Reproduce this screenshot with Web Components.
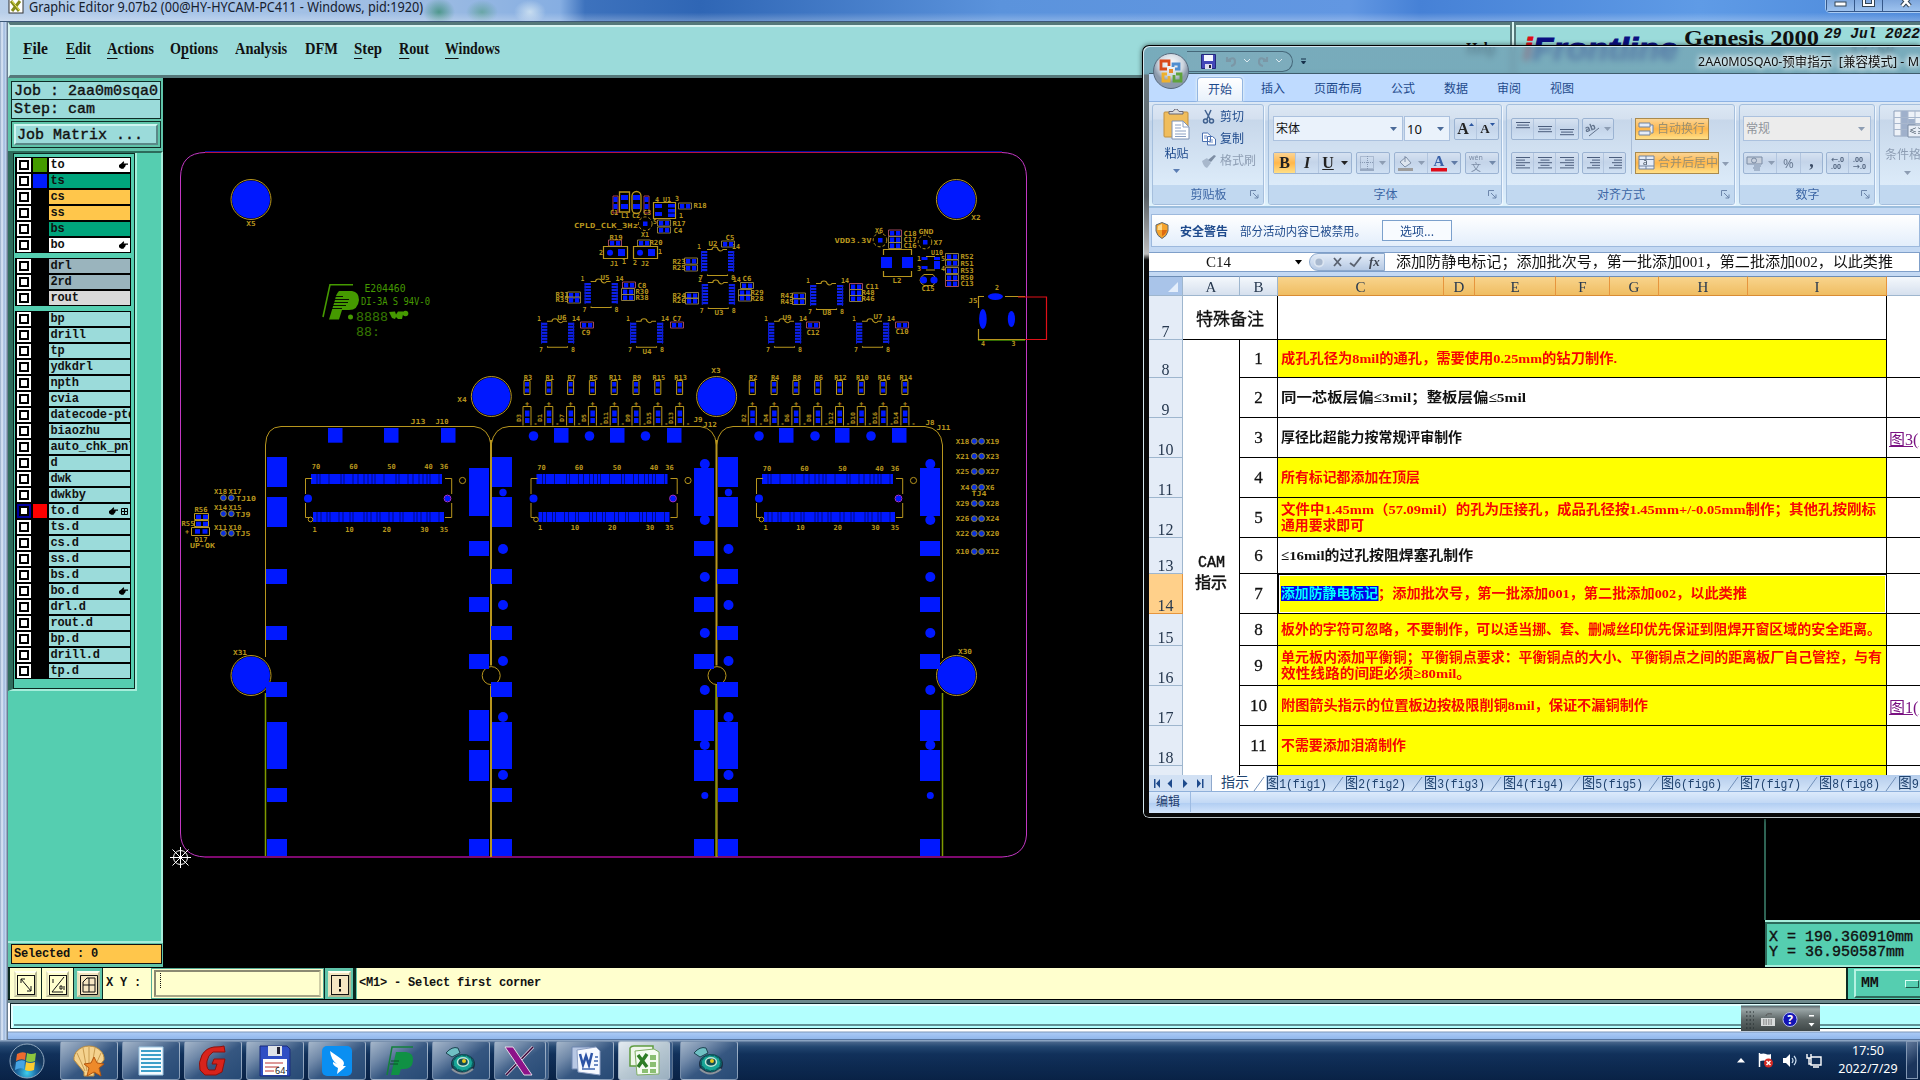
<!DOCTYPE html>
<html lang="zh-CN">
<head>
<meta charset="utf-8">
<title>Graphic Editor</title>
<style>
    html, body { margin: 0; padding: 0; width: 1920px; height: 1080px; overflow: hidden; background: #000; }
    body { position: relative; font-family: "Noto Sans", "Noto Sans CJK SC", sans-serif; }
</style>
</head>
<body>
<genesis-window></genesis-window>
<excel-window></excel-window>
<win-taskbar></win-taskbar>

<script>
/* ===== small helpers ===== */
function define(name, html) {
    customElements.define(name, class extends HTMLElement {
        connectedCallback() {
            if (this.shadowRoot) return;
            this.attachShadow({ mode: 'open' });
            this.shadowRoot.innerHTML = typeof html === 'function' ? html(this) : html;
        }
    });
}

/* ===== layer list ===== */
const HAND = '<svg width="9" height="8" viewBox="0 0 12 10"><path d="M0 5l3-2 3-3 1 1-1 2h6v1.600H9v1h-.5v1.500H8V8H7L6 10H3L0 8z"/></svg>';
const GRIDMARK = '<svg width="7" height="7" viewBox="0 0 7 7" style="margin-left:3px"><path d="M.5.5h6v6h-6zM3.500 0v7M0 3.500h7" fill="none" stroke="#000"/></svg>';

define('layer-row', el => `
    <style>
        :host { display: flex; gap: 2px; height: 14px; }
        .box { width: 4px; height: 4px; background: #fff; border: 2px solid #000; padding: 1px; }
        .chk { box-sizing: border-box; width: 14px; height: 14px; padding: 2px; background: ${el.getAttribute('chk') || '#fff'}; }
        .swatch { width: 14px; height: 14px; background: ${el.getAttribute('swatch') || '#000'}; }
        .name { display: flex; align-items: center; width: 81px; height: 14px; box-sizing: border-box; padding: 0 2px 0 1.5px;
            overflow: hidden; white-space: pre; background: ${el.getAttribute('bg') || '#9bdbda'};
            font: bold 12px/15px "Liberation Mono", monospace; letter-spacing: -.15px; color: #111; }
        .name i { margin-left: auto; flex: none; height: 8px; line-height: 0; }
    </style>
    <div class="chk"><div class="box"></div></div>
    <div class="swatch"></div>
    <div class="name"><slot></slot><i>${el.hasAttribute('hand') ? HAND : ''}${el.hasAttribute('mark') ? GRIDMARK : ''}</i></div>
`);

const plain = 'bp drill tp ydkdrl npth cvia datecode-ptd biaozhu auto_chk_pnl d dwk dwkby to.d ts.d cs.d ss.d bs.d bo.d drl.d rout.d bp.d drill.d tp.d'.split(' ');
const plainRows = plain.map(n => {
    let a = '';
    if (n === 'to.d') a = 'chk="#0000a0" swatch="#ff0000" hand mark';
    if (n === 'bo.d') a = 'hand';
    return `<layer-row ${a}>${n}</layer-row>`;
}).join('');

define('layer-panel', `
    <style>
        :host { display: block; flex: 1; background: #55ceb0; border-right: 2px solid #a6eedb; border-bottom: 2px solid #a6eedb; border-top: 2px solid #2c6b5b; box-sizing: border-box; }
        .list { width: 122px; height: 536px; border-left: 5px solid #2f6c5c; border-right: 2px solid #a6eedb; border-bottom: 2px solid #a6eedb; }
        .in { box-sizing: border-box; height: 536px; border: 1px solid #0c2a22; padding: 3px 2px 0 1px; display: flex; flex-direction: column; gap: 5px; }
        .grp { display: flex; flex-direction: column; gap: 2px; background: #000; padding: 1px 1px 1px 2px; width: 113px; }
    </style>
    <div class="list"><div class="in">
        <div class="grp">
            <layer-row swatch="#459a00" bg="#fff" hand>to</layer-row>
            <layer-row swatch="#001cff" bg="#00a47c">ts</layer-row>
            <layer-row bg="#ffc64b">cs</layer-row>
            <layer-row bg="#ffc64b">ss</layer-row>
            <layer-row bg="#00a47c">bs</layer-row>
            <layer-row bg="#fff" hand>bo</layer-row>
        </div>
        <div class="grp">
            <layer-row bg="#9ab4bd">drl</layer-row>
            <layer-row bg="#9ab4bd">2rd</layer-row>
            <layer-row bg="#d9d9d9">rout</layer-row>
        </div>
        <div class="grp">${plainRows}</div>
    </div></div>
`);

define('side-bar', `
    <style>
        :host { display: flex; flex-direction: column; width: 155px; flex: none; background: #60c4aa; font-family: "Liberation Mono", monospace; color: #111; }
        .line { box-sizing: border-box; width: 150px; margin-left: 3px; height: 19px; border: 1px solid #0e2b25; background: #9bdbda; font-size: 15px; line-height: 19px; padding-left: 2px; white-space: pre; -webkit-text-stroke: .4px #111; }
        .line + .line { border-top: 0; line-height: 20px; }
        .matrix { box-sizing: border-box; width: 150px; height: 27px; margin: 2px 0 2px 3px; border: 1px solid #0e2b25; padding: 2px; }
        .btn { box-sizing: border-box; height: 21px; background: #9bdbda; border: 2px solid; border-color: #cff5f1 #5a8887 #5a8887 #cff5f1; font-size: 15px; line-height: 19px; padding-left: 1px; white-space: pre; -webkit-text-stroke: .4px #111; }
        .sel { box-sizing: border-box; width: 151px; height: 20px; margin: 1px 0 3px 3px; border: 1px solid #111; background: #ffc64b; font: bold 12px/18px "Liberation Mono", monospace; letter-spacing: -.2px; padding-left: 2px; white-space: pre; }
    </style>
    <div style="height:3px"></div>
    <div class="line">Job : 2aa0m0sqa0</div>
    <div class="line">Step: cam</div>
    <div class="matrix"><div class="btn">Job Matrix ...</div></div>
    <div style="height:1px"></div>
    <layer-panel></layer-panel>
    <div class="sel">Selected : 0</div>
`);

/* ===== board drawing; coordinates are canvas pixels ===== */
const GOLD = '#b8961e', BLUE = '#0018ff', GREEN = '#459a00';

function boardSvg() {
    const out = [];
    const rect = (x, y, w, h, f = BLUE) => out.push(`<rect x="${x}" y="${y}" width="${w}" height="${h}" fill="${f}"/>`);
    const dot = (x, y, r, f = BLUE) => out.push(`<circle cx="${x}" cy="${y}" r="${r}" fill="${f}"/>`);
    const ring = (x, y, r, s = GOLD) => out.push(`<circle cx="${x}" cy="${y}" r="${r}" fill="none" stroke="${s}"/>`);
    const line = (d, s = GOLD, w = 1) => out.push(`<path d="${d}" fill="none" stroke="${s}" stroke-width="${w}"/>`);
    // label centred on x, y
    const txt = (x, y, s, w = s.length * 4.7, rot = 0, size = 7, f = GOLD) =>
        out.push(`<text x="${x}" y="${y + size * .35}" font-size="${size}" fill="${f}"${f === GOLD ? ' font-weight="bold"' : ''} text-anchor="middle" textLength="${w}" lengthAdjust="spacingAndGlyphs"${rot ? ` transform="rotate(-90 ${x} ${y})"` : ''}>${s}</text>`);

    // outline
    line('M205 152.500Q181 153 180.500 177V833Q181 856 205 857', '#c338c3');
    line('M1002 857Q1025 856 1026.500 835V177Q1026 153 1002 152.500', '#c338c3');
    line('M205 151.500H1002', '#0010a0');
    line('M205 152.500H1002', '#b81040');
    line('M205 857H1002', '#a80d95', 1.6);

    // fixing holes
    [[251, 199.5], [956.4, 199.5], [491.3, 396.5], [716.6, 396.5], [251, 675.5], [956.5, 675.5]].forEach(([x, y]) => { dot(x, y, 19); ring(x, y, 20); });
    txt(251, 224, 'X5'); txt(976, 218, 'X2'); txt(462, 400, 'X4'); txt(716, 371, 'X3'); txt(240, 652.5, 'X31'); txt(965, 652, 'X30');

    // modules
    line('M265.500 657V445Q266 427 281 426.500H474Q489 428 491 445Q494 427 509 426.500H700Q715 428 716.500 445Q719 427 733 426.500H925Q941 428 942.500 445V658');
    line('M491 440V665.500M491 685.500V857M716.500 440V665.500', GOLD, 2);
    line('M265.500 693V856M942.500 693V856M716 685V857', '#7f9a00', 1.5);
    line('M717 685V857', GOLD, 1.2);
    [491.2, 717].forEach(x => ring(x, 675.6, 9));

    [0, 225.5, 451].forEach((o, m) => {
        [328, 384, 441].forEach(x => rect(Math.round(x + o), 428, 14.5, 14.7));
        [[457, 30], [497, 30], [569, 15], [626, 14], [682, 15], [722, 47], [788, 14], [839, 17]].forEach(([y, h], i) => {
            const wide = [2, 3, 4].includes(i) ? 1 : 0;
            rect(Math.floor(267 + o) - wide, y, 20 + wide, h);
        });
        [[468, 48], [541, 15], [597, 15], [654, 15], [710, 31], [750, 31], [839, 17]].forEach(([y, h]) => rect(Math.floor(469 + o), y, 20, h));
        if (m) {
            [308, 364, 420].forEach(x => dot(x + o, 436, 4.8));
            [549, 605, 661, 717, 775].forEach(y => dot(277.5 + o, y, 5));
            dot(277.5 + o, 492.5, 3.7);
            [464, 520, 577, 633, 690, 745].forEach(y => dot(479.3 + o, y, 5));
            dot(479.3 + o, 795.5, 3.5);
        }
        // mezzanine connector
        rect(311 + o, 474, 131, 10); rect(313 + o, 512, 131, 10);
        for (let i = 0, x = 317; x < 441; i++, x += [4, 3, 9, 12, 3, 9, 5, 6, 4][i % 9]) line(`M${x + o} 474v10`, '#000a70', .9);
        for (let i = 0, x = 317; x < 443; i++, x += [3, 4, 6, 3, 9, 4, 7, 3, 11][i % 9]) line(`M${x + o} 512v10`, '#000a70', .9);
        line(`M${312 + o} 478.500H${305.5 + o}V494M${305.5 + o} 503V517.500H${309 + o}M${445 + o} 478.500H${451.7 + o}V494M${451.7 + o} 503V517.500H${445 + o}`);
        dot(308 + o, 498.5, 4); dot(447.5 + o, 498.5, 2.8); ring(447.5 + o, 498.5, 3.4, '#a030e8');
        ring(310.5 + o, 519.5, 2.3); ring(462.5 + o, 480.5, 3.1);
        [['70', 316], ['60', 353.5], ['50', 391.5], ['40', 428.5], ['36', 444]].forEach(([s, x]) => txt(x + o, 467 + m, s, 8.5));
        [['1', 314.5], ['10', 349.5], ['20', 386.7], ['30', 424.5], ['35', 444]].forEach(([s, x]) => txt(x + o, (m ? 528 : 529.5), s, s.length * 4.2));
    });
    txt(418, 421.5, 'J13', 15); txt(442, 421.5, 'J10', 13); txt(698, 419.5, 'J9', 9); txt(710, 424.5, 'J12', 14);
    txt(930, 422.5, 'J8', 9); txt(943.5, 427.5, 'J11', 14);

    // resistor and led columns
    const col = (x, r, d) => {
        txt(x + 1, 377.5, r, r.length * 4.2);
        line(`M${x - 3} 380.500h6v14h-6z`); rect(x - 2, 382, 4, 4.5); rect(x - 2, 388.5, 4, 4);
        txt(x, 403.3, '+', 4);
        line(`M${x - 4} 425.500V406.500h8v19`); rect(x - 2, 410.5, 4.5, 6); rect(x - 2, 418, 4.5, 5);
        txt(x - 8.5, 418, d, d.length * 4, 1, 6); txt(x + 8.5, 423.5, '-', 4);
    };
    [['R3', 'D3'], ['R1', 'D1'], ['R7', 'D7'], ['R5', 'D5'], ['R11', 'D11'], ['R9', 'D9'], ['R15', 'D15'], ['R13', 'D13']].forEach(([r, d], i) => col(527 + i * 21.8, r, d));
    [['R2', 'D2'], ['R4', 'D4'], ['R8', 'D6'], ['R6', 'D8'], ['R12', 'D12'], ['R10', 'D10'], ['R16', 'D16'], ['R14', 'D14']].forEach(([r, d], i) => col(752.3 + i * 21.8, r, d));

    // 14 pin packages
    const ic = (x, y, name, nx, ny) => {
        for (let k = 0; k < 7; k++) { rect(x, y + k * 3, 6.3, 2.2, '#0c20ea'); rect(x + 27, y + k * 3, 6.3, 2.2, '#0c20ea'); }
        line(`M${x + .5} ${y}v21M${x + 32.5} ${y}v21`, '#0c1cd0');
        line(`M${x + 6.500} ${y + 23.500}v1h20v-1M${x + 6} ${y - 1.500}h5a3 2.500 0 1 1 6 0q3 3 5 0h4`, GOLD, 1.1);
        txt(x - 2, y - 4, '1', 3.5); txt(x + 35, y - 4, '14', 8); txt(x, y + 26.5, '7', 4); txt(x + 32, y + 27, '8', 4); txt(nx, ny, name, 9);
    };
    ic(584.6, 283, 'U5', 605, 277.5); ic(541, 322.7, 'U6', 562, 318); ic(630, 322.7, 'U4', 647, 352); ic(701, 251, 'U2', 713, 244);
    ic(701.8, 284, 'U3', 719, 313); ic(810, 285, 'U8', 827, 313); ic(768, 322.7, 'U9', 787, 317.5); ic(856, 322.7, 'U7', 878, 317);

    // two pad parts; horizontal
    const part = (x, y, s, sx, sy, red) => {
        line(`M${x - 6.500} ${y - 3}h13v6h-13z`, red ? '#b05068' : '#9a8745', .9);
        rect(x - 5, y - 2, 4.2, 4.5); rect(x + 1, y - 2, 4.2, 4.5);
        if (s) txt(sx, sy, s, s.length * 4.4);
    };
    part(685, 206, 'R18', 700, 206); part(664, 223, 'R17', 679, 223.5); part(664, 230, 'C4', 678, 230.5);
    part(615, 243, 'R19', 616, 238, 1); part(644, 243, 'R20', 656, 243); part(728, 244, 'C5', 730, 238);
    part(691, 261, 'R23', 679, 262); part(691, 268, 'R25', 679, 268);
    part(574, 295, 'R31', 562, 294.5); part(574, 300, 'R35', 562, 300); part(629, 285, 'C8', 642, 286, 1); part(628, 291.5, 'R30', 642, 292); part(628, 297.5, 'R38', 642, 298);
    part(692, 295.5, 'R24', 679, 295.5); part(692, 301, 'R26', 679, 301); part(747, 285.5, 'C6', 747, 279); part(745, 292.5, 'R29', 757, 292.5); part(745, 298, 'R28', 757, 299);
    part(799, 296, 'R42', 787, 296); part(799, 301.5, 'R45', 787, 301.5); part(856, 286.5, 'C11', 872, 286.5, 1); part(856, 292.5, 'R48', 868, 293); part(856, 298.5, 'R46', 868, 299);
    part(587, 325, 'C9', 586, 332.5, 1); part(677, 325, 'C7', 677, 319, 1); part(813, 325, 'C12', 813, 332.5, 1); part(902, 325, 'C10', 902, 332, 1);
    part(895, 233, 'C18', 910, 234, 1); part(895, 239.5, 'C17', 910, 240); part(895, 245.5, 'C16', 910, 246);
    [['R52', 256.5], ['R51', 263], ['R53', 270.5], ['R50', 277.5], ['C13', 283.5]].forEach(([s, y]) => part(952, y, s, 967, y + .5, s === 'C13'));

    // clock corner
    line('M613 196h5v17h-5zM644 196h5v17h-5z', '#a83a55');
    line('M619.500 192h10v20h-10zM632 196a4.500 4.500 0 0 1 9 0v13a4.500 4.500 0 0 1-9 0z', GOLD, 1.3);
    [[613.5, 198], [613.5, 205], [644.5, 198], [644.5, 205]].forEach(([x, y]) => rect(x, y - 1, 4, 5));
    rect(621, 195, 7, 5); rect(621, 204, 7, 5); rect(633, 195, 7, 5); rect(633, 204, 7, 5);
    txt(614, 213, 'C1', 8); txt(625, 216, 'L1', 8); txt(636, 216, 'C2', 8); txt(647, 213, 'C3', 8);
    line('M653.500 202.500h22v16h-22z', GOLD, 1.2);
    [204, 212].forEach(y => rect(655, y, 7, 4)); [204, 209, 213.5].forEach(y => rect(668, y, 7, 3.5));
    txt(657, 200, '4', 4); txt(667, 200, 'U1', 8); txt(677, 199, '3', 4); txt(681, 216, '1', 4); txt(655, 222, '5', 4);
    txt(606, 225.5, 'CPLD_CLK_3Hz', 64); txt(645, 235, 'X1', 8); rect(643, 221.5, 4.5, 4.5);
    const dashed = (x, y) => out.push(`<circle cx="${x}" cy="${y}" r="6.800" fill="none" stroke="${GOLD}" stroke-dasharray="3 2"/>`);
    dashed(645.3, 223.7);
    line('M603.500 246.500h24v12h-24zM633.500 246.500h24v12h-24z', GOLD, 1.2);
    dot(610, 252.7, 3); rect(618, 249, 7, 7); dot(640, 252.7, 3); rect(648, 249, 7, 7);
    txt(601, 253, '2', 4); txt(614, 264, 'J1', 8); txt(624, 262, '1', 4); txt(635, 263, '2', 4); txt(645, 264, 'J2', 8); txt(660, 252, '1', 4);

    // supply corner
    txt(853, 241, 'VDD3.3V', 37); txt(879, 231, 'X6', 8); dashed(880, 240); rect(878, 238, 4.5, 4.5);
    txt(926, 231.5, 'GND', 15); dashed(925, 242); rect(923, 240, 4.5, 4.5); txt(938, 242.5, 'X7', 9);
    line('M883.500 255V249.500h28v5.500M883.500 271v5.500h28v-5.500', GOLD, 1.2); rect(881, 257, 11, 11); rect(902, 257, 11, 11); txt(897, 280.5, 'L2', 9);
    line('M926 256.500h9M926 270h9', GOLD); rect(921.5, 257, 6, 3); rect(921.5, 266, 6, 3); rect(934, 257, 6, 3); rect(934, 261, 6, 8);
    txt(937, 252.5, 'U10', 12); txt(919, 258.5, '1', 4); txt(919, 268.5, '3', 4); txt(943, 258.5, '5', 4); txt(943, 268.5, '4', 4);
    line('M924 274.500h9q5 5 0 11h-9q-8-5 0-11z'); dot(923.5, 280, 3.6); dot(934, 280, 3.6); txt(928, 289, 'C15', 13);

    // power jack
    line('M984 296.500H978.500V308M978.500 329V339.500H1025M1005 296.500H1025', GOLD, 1.2); line('M978 340.500h47', GREEN, .7);
    line('M1018 297H1046.500V339.500H1025', '#e01018', 1.2);
    out.push(`<ellipse cx="995.400" cy="296.600" rx="7.500" ry="3.400" fill="${BLUE}"/><ellipse cx="982.900" cy="319" rx="3.800" ry="10" fill="${BLUE}"/><ellipse cx="1011.400" cy="319" rx="3.600" ry="8" fill="${BLUE}"/>`);
    txt(997, 288, '2', 4); txt(983, 344, '4', 4); txt(1013.5, 344, '3', 4); txt(973, 301, 'J5', 9);

    // test points
    const tp = (x, y) => { dot(x, y, 2.6, '#0a30e0'); ring(x, y, 2.9, '#8c8850'); };
    [['X18', 'X19', 441.3], ['X21', 'X23', 456.2], ['X25', 'X27', 471.5], ['X4', 'X6', 487.3], ['X29', 'X28', 503.4], ['X26', 'X24', 518.7], ['X22', 'X20', 533.5], ['X10', 'X12', 551.6]].forEach(([a, b, y]) => {
        tp(974.3, y); tp(981.6, y); txt(a.length < 3 ? 965 : 962.5, y, a, a.length * 4.5); txt(b.length < 3 ? 990 : 992.5, y, b, b.length * 4.5);
    });
    txt(979, 494, 'TJ4', 15);
    [['X18', 'X17', 497.8, 'TJ10', 246], ['X14', 'X15', 513.7, 'TJ9', 243], ['X11', 'X10', 533.3, 'TJ5', 243]].forEach(([a, b, y, t, tx]) => {
        tp(223.4, y); tp(231.3, y); txt(220.5, y - 6, a, 13); txt(235, y - 6, b, 13); txt(tx, y + .5, t, t.length * 5);
    });
    line('M194.500 513.500h14v6h-14zM194.500 520.500h14v6h-14zM191.500 527.500h18v8h-18z');
    [[196, 515], [203, 515], [196, 522], [203, 522], [195, 529.5], [202.5, 529.5]].forEach(([x, y]) => rect(x, y - .3, 5, 4.5));
    txt(201, 510, 'R56', 13); txt(188, 523.7, 'R55', 13); txt(187, 532, '+', 4); txt(201, 540, 'D17', 13); txt(202.5, 546, 'UP-OK', 25);

    // maker mark
    line('M323 317L330 284.700H353', GREEN, 1.6);
    out.push(`<path fill="${GREEN}" d="M339 291H352Q359 292 359 300Q358 310 349 310H342L339 319.500H329L335 300Q336 294 339 291z"/>`);
    line('M332 299.500h17M332 302.500h16M331 305.500h15M330 308.500h12M340 288.500h10M333 296.500h10', '#000', .9);
    txt(385, 288.7, 'E204460', 41, 0, 10, GREEN); txt(395.5, 301.5, 'DI-3A S 94V-0', 69, 0, 10, GREEN);
    dot(350.5, 317, 2.5, GREEN);
    out.push(`<g opacity=".75">`); txt(372, 316.5, '8888', 32, 0, 12, GREEN); txt(368, 331.5, '88:', 24, 0, 12, GREEN); out.push('</g>');
    out.push(`<path fill="${GREEN}" d="M389 312l6-.5 1 3 2-3h5v3l-1 4.500h-4l-2-2-1 2-3-1z"/>`); dot(405.5, 313.5, 2.8, GREEN);

    // origin
    line('M170 857.500h21M180.500 847v21M172.500 849.500l16 16M188.500 849.500l-16 16', '#fff'); ring(180.5, 857.5, 7, '#fff');
    return out.join('');
}

define('pcb-canvas', () => `
    <style>
        :host { display: block; flex: 1; height: 889px; background: #000; overflow: hidden; }
        svg { display: block; font-family: "DejaVu Sans Mono", monospace; }
        .edge { stroke: #2e6354; }
    </style>
    <svg width="1757" height="889" viewBox="163 78 1757 889">${boardSvg()}<path class="edge" d="M1765 78V920" stroke-width="2"/></svg>
`);

/* ===== menu bar ===== */
define('genesis-menu', `
    <style>
        :host { display: flex; height: 56px; box-sizing: border-box; font-family: "Liberation Serif", serif; color: #111; background: #d8f4f2; }
        .bar { box-sizing: border-box; background: #9bdbda; border: solid #55787a; border-width: 3px 2px; border-left-color: #d8f4f2; box-shadow: inset 0 2px #d8f4f2; }
        .menu { width: 1506px; display: flex; align-items: center; padding: 0 0 2px 13px; gap: 17px; font-weight: bold; font-size: 16px; }
        .help { margin: 0 14px 0 auto; }
        .brand { flex: 1; margin-left: 2px; border-left-color: #55787a; border-right: 0; display: flex; align-items: flex-start; padding: 3px 0 0 7px; }
        .logo { font: italic bold 31px/36px "Liberation Sans", sans-serif; color: #0b0f82; margin-top: 4px; -webkit-text-stroke: 1px; }
        .logo b { color: #e00b18; }
        .gen { font-weight: bold; font-size: 22px; line-height: 24px; margin: -2px 0 0 6px; }
        .date { margin: -3px 0 0 5px; width: 96px; font: italic bold 14px/17px "Liberation Mono", monospace; display: flex; flex-direction: column; align-items: center; padding-top: 1px; }
        u { text-decoration-thickness: 1px; text-underline-offset: 4px; }
        .l { margin-left: -1px; } .r { margin-left: 1px; }
    </style>
    <div class="bar menu">
        <fit-text w="25"><u>F</u>ile</fit-text><fit-text class="r" w="25"><u>E</u>dit</fit-text><fit-text class="l" w="47"><u>A</u>ctions</fit-text>
        <fit-text class="l" w="48">O<u>p</u>tions</fit-text><fit-text w="52">Analysis</fit-text><fit-text class="r" w="33">DFM</fit-text>
        <fit-text class="l" w="28"><u>S</u>tep</fit-text><fit-text w="30"><u>R</u>out</fit-text><fit-text class="l" w="55"><u>W</u>indows</fit-text>
        <fit-text class="help" w="30">Help</fit-text>
    </div>
    <div class="bar brand">
        <fit-text class="logo" w="155"><b>i</b>Frontline</fit-text>
        <fit-text class="gen" w="135">Genesis 2000</fit-text>
        <div class="date"><fit-text w="96">29 Jul 2022</fit-text><fit-text w="44">17:50</fit-text></div>
    </div>
`);

/* ===== prompt bar ===== */
define('prompt-bar', `
    <style>
        :host { display: flex; height: 33px; padding-left: 1px; box-sizing: border-box; border-top: 1px solid #000; border-bottom: 1px solid #000; background: #0c2a22; font: bold 12px/29px "Liberation Mono", monospace; letter-spacing: -.2px; color: #111; }
        .c { background: #ffffce; display: flex; align-items: center; box-sizing: border-box; white-space: pre; }
        .ic { width: 31px; justify-content: center; margin-left: 1px; }
        .ic.t { background: #5fc4aa; width: 28px; }
        .ic i { display: block; width: 23px; height: 26px; box-sizing: border-box; border: 2px solid; border-color: #fffff0 #b9b894 #b9b894 #e4e3bd; background: #ffffce; padding: 2px 0 0 1px; line-height: 0; }
        .ic.t i { background: #f6e6c2; }
        svg { fill: none; stroke: #111; }
        .xy { width: 48px; padding-left: 3px; margin-left: 1px; }
        .inp { width: 173px; border: 1px solid #55ab95; padding: 2px; }
        .inp i { width: 167px; height: 27px; box-sizing: border-box; border: 2px solid; border-color: #8b8a72 #cfcea6 #a8a788 #8b8a72; padding: 1px 4px; display: flex; }
        .cur { border-left: 1px dotted #111; height: 15px; }
        .msg { flex: 1; padding-left: 2px; margin: 0 2px 0 3px; border-left: 1px solid #5fc4aa; }
        .mm { width: 72px; background: #55ceb0; padding: 1px 0 1px 6px; }
        .mm b { box-sizing: border-box; flex: 1; height: 29px; border: 2px solid; border-right: 0; border-color: #b5f2e2 #2e6b5b #2e6b5b #b5f2e2; display: flex; align-items: center; padding-left: 5px; font-size: 15px; }
        .mm b i { width: 12px; height: 6px; margin-left: 26px; border: 1px solid; border-color: #d8fff4 #1f5a4b #1f5a4b #d8fff4; background: #55ceb0; }
    </style>
    <div class="c ic"><i><svg width="19" height="20"><rect x=".5" y=".5" width="17" height="19"/><path d="M4 8V4h4M4 4l10 12M14 11v5h-4"/></svg></i></div>
    <div class="c ic"><i><svg width="19" height="20"><rect x=".5" y=".5" width="17" height="19"/><path d="M15 2L3 17h11M4 4v4M11 11h2v3h-2zM15 11v4"/></svg></i></div>
    <div class="c ic t"><i><svg width="19" height="20"><path d="M.5.5h17v19H.5zM3 17V7l4-4h8v14zM9 3v14M3 10h12"/></svg></i></div>
    <div class="c xy">X Y :</div>
    <div class="c inp"><i><span class="cur"></span></i></div>
    <div class="c ic t"><i><svg width="19" height="20"><rect x=".5" y=".5" width="17" height="19"/><path d="M9 4v8M9 14v2.500" stroke-width="2"/></svg></i></div>
    <div class="c msg">&lt;M1&gt; - Select first corner</div>
    <div class="c mm"><b>MM<i></i></b></div>
`);

/* ===== CAM editor window ===== */
define('genesis-window', `
    <style>
        :host { position: absolute; left: 0; top: 0; width: 1920px; height: 1040px; box-sizing: border-box; display: flex; flex-direction: column; padding-left: 8px;
            background: linear-gradient(90deg, #8fa6c4 0, #e2ecfa 2px, #9db8dc 4px, #c8dbf3 6px, #6a7d92 7px, #6a7d92 8px); }
        .title { height: 22px; margin-left: -8px; box-sizing: border-box; padding: 0 0 8px 8px; display: flex; gap: 5px; align-items: center; overflow: hidden;
            border-bottom: 1px solid #3d5878; font-size: 14px; line-height: 14px; color: #16202e;
            background: linear-gradient(180deg, #fff0 60%, #ffffff40), radial-gradient(ellipse 16px 14px at 439px 12px, #3d8f78cc, #0000), radial-gradient(ellipse 16px 12px at 482px 12px, #5fa298cc, #0000), radial-gradient(ellipse 16px 12px at 530px 12px, #c8ddf0, #0000), linear-gradient(90deg, #b9cfe9, #a8c5e8 180px, #9cbbe2 430px, #86aee2 560px, #3d72bd 585px, #2f66b5 700px, #5b93dc 1000px, #6297e2 1350px, #4681d6 1420px, #5f9be6 1700px, #4b88da); }
        .app { width: 16px; height: 16px; flex: none; }
        .caps { display: flex; margin-left: auto; align-self: flex-start; border: 1px solid #35588a; border-top: 0; border-right: 0; border-radius: 0 0 0 4px; height: 11px; box-shadow: 0 0 0 1px #a9cbf2; }
        .caps i { width: 27px; border-right: 1px solid #35588a; display: flex; justify-content: center; background: linear-gradient(#7fa8de, #9dc2ee); }
        .caps i:last-child { width: 37px; border: 0; justify-content: flex-start; }
        .caps i:last-child svg { margin-left: 16px; }
        .main { display: flex; flex: 1; min-height: 0; position: relative; }
        .coords { position: absolute; right: 0; bottom: 0; width: 155px; height: 47px; box-sizing: border-box; background: #55ceb0; border-top: 2px solid #a6eedb; box-shadow: inset 2px 2px #2c6b5b; border-bottom: 2px solid #a6eedb; padding: 8px 0 0 4px; font: 15px/15px "Liberation Mono", monospace; -webkit-text-stroke: .4px #111; color: #111; white-space: pre; }
        .foot { height: 40px; border-top: 3px solid #6d898c; box-sizing: border-box; background: linear-gradient(180deg, #fff 0 28px, #7d97b8 29px, #a8c8f4 30px, #92b8ec 36px, #1d3354 37px); padding: 0 0 0 2px; }
        .foot div { height: 26px; box-sizing: border-box; border: 1px solid #10282c; border-right: 0; background: #b3fffe; box-shadow: inset 2px 2px #e6ffff; padding: 20px 0 0 3px; }
        .foot div::before { content: ""; display: block; height: 2px; background: #5f9296; }
    </style>
    <div class="title">
        <svg class="app" viewBox="0 0 16 16"><rect x="1" y="-2" width="14" height="16" fill="#fff" stroke="#333"/><path d="M3 2l8 10M12 2L4 12" stroke="#868c1c" stroke-width="3"/><path d="M4 2l8 10" stroke="#f0f060"/></svg>
        <fit-text w="394">Graphic Editor 9.07b2 (00@HY-HYCAM-PC411 - Windows, pid:1920)</fit-text>
        <div class="caps">
            <i><svg width="14" height="10"><rect x="1" y="2" width="11" height="4" fill="#fff" stroke="#345"/></svg></i>
            <i><svg width="14" height="10"><path d="M2-2h9v7H2z" fill="none" stroke="#345" stroke-width="4"/><path d="M2-2h9v7H2z" fill="none" stroke="#fff" stroke-width="2"/></svg></i>
            <i><svg width="14" height="10"><path d="M3-3l8 9M11-3L3 6" stroke="#345" stroke-width="4.500"/><path d="M3-3l8 9M11-3L3 6" stroke="#fff" stroke-width="2.500"/></svg></i>
        </div>
    </div>
    <genesis-menu></genesis-menu>
    <div class="main">
        <side-bar></side-bar>
        <pcb-canvas></pcb-canvas>
        <div class="coords">X = 190.360910mm
Y = 36.950587mm</div>
    </div>
    <prompt-bar></prompt-bar>
    <div class="foot"><div></div></div>
`);

/* ===== spreadsheet ribbon ===== */
const ARROW = '<svg width="7" height="4" viewBox="0 0 7 4" style="flex:none"><path d="M0 0h7L3.500 4z" fill="currentColor"/></svg>';
const lines = (ws, al, top = 0) => `<svg width="16" height="16" fill="none" stroke="#4b5d7c">${ws.map((w, i) => `<path d="M${al === 'r' ? 15 - w : al === 'c' ? 8 - w / 2 : 1} ${top + 1.5 + i * 2.6}h${w}"/>`).join('')}</svg>`;

define('ribbon-group', el => `
    <style>
        :host { display: flex; flex-direction: column; flex: none; width: ${el.getAttribute('w')}px; height: 101px; box-sizing: border-box; border: 1px solid #a5bfdd; border-radius: 3px; overflow: hidden;
            box-shadow: 1px 1px #f0f7ff; background: linear-gradient(#dce7f4 0, #d4e0ef 14px, #c7d7ea 15px, #dcebf9 80px); }
        .body { height: 80px; box-sizing: border-box; }
        .cap { display: flex; align-items: center; flex: 1; background: #c1d8f0; color: #3c66a5; font-size: 12px; }
        .cap span { flex: 1; text-align: center; padding-left: 14px; }
        svg { margin-right: 4px; }
    </style>
    <div class="body"><slot></slot></div>
    <div class="cap"><span>${el.getAttribute('cap')}</span>${el.hasAttribute('nolaunch') ? '' : '<svg width="9" height="9" fill="none" stroke="#6d86ab"><path d="M.5 6V.5H6M3 3l5 5M8 4.500V8H4.500"/></svg>'}</div>
`);

define('btn-set', `
    <style>
        :host { display: flex; height: 22px; box-sizing: border-box; border: 1px solid #9bb3d2; border-radius: 2px; background: linear-gradient(#d6e2f1, #c4d4e9 45%, #cfe0f3); flex: none; }
        ::slotted(*) { display: flex; align-items: center; justify-content: center; gap: 4px; border-right: 1px solid #b3c6df; box-sizing: border-box; }
        ::slotted(:last-child) { border-right: 0 !important; }
    </style><slot></slot>
`);

define('excel-ribbon', `
    <style>
        :host { display: block; color: #1e4a8c; font-size: 12px; line-height: 14px; background: #bfdbff; }
        .tabs { display: flex; height: 27px; padding-left: 48px; align-items: flex-end; box-sizing: border-box; }
        .tabs span { height: 24px; line-height: 24px; margin-right: 29px; }
        .tabs .on { width: 46px; text-align: center; background: linear-gradient(#fff, #e8f1fb); border: 1px solid #93b6e2; border-bottom: 0; border-radius: 4px 4px 0 0; box-sizing: border-box; margin-right: 18px; box-shadow: 0 0 3px #ffe; }
        .strip { height: 107px; box-sizing: border-box; border-top: 1px solid #8db2e3; border-bottom: 2px solid #9cbede; background: linear-gradient(#dce8f5, #cddcee 18px, #c2d4ea 19px, #d8eafa 90px, #e0f3fb); display: flex; gap: 4px; padding: 2px 0 0 3px; }
        .row { display: flex; align-items: center; }
        .clip { display: flex; padding: 4px 0 0 8px; }
        .paste { width: 31px; display: flex; flex-direction: column; align-items: center; }
        .cmds { margin-left: 9px; display: flex; flex-direction: column; padding-top: 0; gap: 7px; }
        .cmds .row { gap: 4px; height: 15px; }
        .box { height: 25px; box-sizing: border-box; border: 1px solid #abc1de; background: #eaf2fb; display: flex; align-items: center; justify-content: space-between; padding: 0 5px 0 2px; color: #4a6a99; }
        .box span { color: #111; } .r2 { margin-top: 11px; }
        .serif { font: bold 16px/20px "Liberation Serif", serif; color: #222; }
        .orange { background: linear-gradient(#fbd493, #ffb74b 50%, #ffdf86); }
        .ob { height: 22px; box-sizing: border-box; border: 1px solid #a98a4e; display: flex; align-items: center; gap: 3px; padding-left: 2px; color: #9b9070; white-space: nowrap; }
        .gray { color: #8d9db3; }
    </style>
    <div class="tabs"><span class="on">开始</span><span>插入</span><span>页面布局</span><span>公式</span><span>数据</span><span>审阅</span><span>视图</span></div>
    <div class="strip">
        <ribbon-group w="112" cap="剪贴板"><div class="clip">
            <div class="paste">
                <svg width="30" height="32" viewBox="0 0 30 32"><rect x="2" y="3" width="24" height="25" rx="1" fill="#f0bd5c" stroke="#c09040"/><path d="M7 5V2.500h4L13 0h2l2 2.500h4V5z" fill="#ddd" stroke="#667"/><path d="M10 12h11l6 6v12H10z" fill="#fff" stroke="#7f93b5"/><path d="M21 12v6h6M13 16h6M13 19h6M13 22h11M13 25h11M13 27.500h11" fill="none" stroke="#8ba0c3"/></svg>
                <span style="margin:6px 0 6px">粘贴</span><span style="color:#5a7db3;line-height:4px">${ARROW}</span>
            </div>
            <div class="cmds">
                <div class="row"><svg width="15" height="15" fill="none" stroke="#40618f" stroke-width="1.500"><path d="M4 1l5 9M10 1L6 10"/><circle cx="4.500" cy="12" r="2"/><circle cx="10.500" cy="12" r="2"/></svg>剪切</div>
                <div class="row"><svg width="15" height="14"><path d="M1.500 1h5l3 2.500v6h-8zM6.500 4.500h5l3 2.500v6h-8z" fill="#fff" stroke="#4a70b0"/><path d="M3 4h3M3 6h3M8 8h4M8 10h4" stroke="#6f8fc8"/></svg>复制</div>
                <div class="row gray"><svg width="15" height="14"><path d="M1 7l5-3 4 5-4 5c-3-1-4-4-5-7z" fill="#a8b8cc"/><path d="M7 6l6-5 2 1-5 6z" fill="#7d8da3"/></svg>格式刷</div>
            </div>
        </div></ribbon-group>
        <ribbon-group w="234" cap="字体"><div style="padding:11px 0 0 4px">
            <div class="row">
                <div class="box" style="width:130px"><span>宋体</span>${ARROW}</div><div class="box" style="width:46px;margin-left:1px"><span style="font-size:13px">10</span>${ARROW}</div>
                <btn-set style="margin-left:4px"><span style="width:22px;gap:0" class="serif">A<svg width="5" height="12"><path d="M0 3h5L2.500 0z" fill="#2b56a0"/></svg></span><span style="width:21px;font-size:13px;gap:0" class="serif">A<svg width="5" height="12"><path d="M0 0h5L2.500 3z" fill="#2b56a0"/></svg></span></btn-set>
            </div>
            <div class="row r2" style="gap:4px">
                <btn-set><span class="serif orange" style="width:22px">B</span><span class="serif" style="width:23px"><i>I</i></span><span class="serif" style="width:32px;gap:7px"><u>U</u>${ARROW}</span></btn-set>
                <btn-set><span style="width:32px" class="gray"><svg width="15" height="15" fill="none" stroke="#8799b3"><path d="M.5.5h13v12H.5zM7.500 0v13M0 6.500h14" stroke-dasharray="1 1"/><path d="M0 14h14" stroke-width="1.500"/></svg>${ARROW}</span></btn-set>
                <btn-set><span style="width:33px" class="gray"><svg width="17" height="17"><path d="M3 7l6-5 5 6-6 4z" fill="#dde5ef" stroke="#8090a8"/><path d="M8 1v6" stroke="#8090a8"/><path d="M1 13h15v3H1z" fill="#9d9d9d"/></svg>${ARROW}</span><span style="width:32px;color:#5f7aa6"><svg width="16" height="18"><text x="8" y="12" text-anchor="middle" font-family="Liberation Serif" font-weight="bold" font-size="15" fill="#3a62a8">A</text><path d="M0 14h16v3.500H0z" fill="#e00b18"/></svg>${ARROW}</span></btn-set>
                <btn-set><span style="width:32px;color:#7289aa"><svg width="17" height="18" fill="#7b8ca5"><text x="8" y="6" text-anchor="middle" font-size="7">wén</text><text x="8" y="16.500" text-anchor="middle" font-size="10">文</text></svg>${ARROW}</span></btn-set>
            </div>
        </div></ribbon-group>
        <ribbon-group w="229" cap="对齐方式"><div style="padding:13px 0 0 4px;display:flex">
            <div style="width:120px;border-right:1px solid #a9bdd7;height:56px;margin-right:3px;flex:none">
                <div class="row" style="gap:3px"><btn-set><span style="width:22px">${lines([14, 12, 14], 'c', 0)}</span><span style="width:22px">${lines([14, 12, 14], 'c', 4)}</span><span style="width:22px">${lines([14, 12, 14], 'c', 7)}</span></btn-set>
                    <btn-set><span style="width:30px" class="gray"><svg width="15" height="16"><text x="0" y="10" font-size="9" font-weight="bold" fill="#62738c" transform="rotate(-20 5 8)">ab</text><path d="M4 15L14 7" stroke="#62738c"/></svg>${ARROW}</span></btn-set></div>
                <div class="row" style="gap:3px;margin-top:12px"><btn-set><span style="width:22px">${lines([14, 9, 14, 9, 14], 'l', 1)}</span><span style="width:22px">${lines([14, 9, 14, 9, 14], 'c', 1)}</span><span style="width:22px">${lines([14, 9, 14, 9, 14], 'r', 1)}</span></btn-set>
                    <btn-set><span style="width:21px">${lines([13, 8, 10, 8, 13], 'r', 1)}</span><span style="width:21px">${lines([13, 8, 10, 8, 13], 'r', 1)}</span></btn-set></div>
            </div>
            <div>
                <div class="ob orange" style="width:74px"><svg width="16" height="15" fill="#e4ecf8" stroke="#71839f" style="flex:none"><path d="M1 1h11v4H1zM1 9h11v4H1zM12 3h3v8h-2"/></svg>自动换行</div>
                <div class="row" style="margin-top:12px"><div class="ob orange" style="width:84px"><svg width="17" height="16" fill="#e4ecf8" stroke="#71839f" style="flex:none"><path d="M1 1h15v13H1zM1 4.500h15M1 11h15M8 1v3M8 11v3"/><text x="5" y="10" font-size="8" stroke="none" fill="#345">a</text></svg>合并后居中</div><span class="gray" style="margin-left:3px;line-height:4px">${ARROW}</span></div>
            </div>
        </div></ribbon-group>
        <ribbon-group w="136" cap="数字"><div style="padding:11px 0 0 3px">
            <div class="box gray" style="width:128px;background:#ececec"><span style="color:#8f949b">常规</span>${ARROW}</div>
            <div class="row r2" style="gap:3px"><btn-set><span style="width:33px" class="gray"><svg width="18" height="16" fill="#c7d0dd" stroke="#7b8ca5"><path d="M1 2h15v7H1z"/><circle cx="8" cy="5.500" r="2.500"/><path d="M8 11h7M7 13h7M8 15h6"/></svg>${ARROW}</span><span style="width:24px;color:#6a7b93;font-size:13px">%</span><span style="width:21px;color:#3c4d66;font:bold 18px/10px Liberation Serif;padding-bottom:5px">,</span></btn-set>
                <btn-set><span style="width:22px;font-size:7px;line-height:7px;color:#586a84;font-weight:bold">←.0<br>.00</span><span style="width:21px;font-size:7px;line-height:7px;color:#586a84;font-weight:bold">.00<br>→.0</span></btn-set></div>
        </div></ribbon-group>
        <ribbon-group w="120" cap="" nolaunch><div class="gray" style="padding:5px 0 0 5px;width:60px;white-space:nowrap">
            <svg width="34" height="32" style="margin-left:8px"><path d="M1 1h28v25H1z" fill="#eef2f8" stroke="#8fa0ba"/><path d="M8 1h7v25H8zM15 9h7v8h-7z" fill="#9fb0cb"/><path d="M1 7.500h28M1 13.500h28M1 19.500h28M8 1v25M15 1v25M22 1v25" stroke="#a8b7cd"/><path d="M15 15h14v12H15z" fill="#e8eef7" stroke="#7b8ca5"/><text x="16" y="24" font-size="8" fill="#345">≤≥</text></svg>
            <div style="margin-top:3px">条件格式</div><div style="margin:7px 0 0 19px;line-height:4px">${ARROW}</div>
        </div></ribbon-group>
    </div>
`);

/* ===== worksheet ===== */
const sheetRows = [
    [7, 44], [8, 38, 1, 1, ['成孔孔径为8mil的通孔，需要使用0.25mm的钻刀制作.', 336]],
    [9, 40, 2, 0, ['同一芯板层偏≤3mil；整板层偏≤5mil', 245]],
    [10, 40, 3, 0, ['厚径比超能力按常规评审制作', 181]],
    [11, 40, 4, 1, ['所有标记都添加在顶层', 139]],
    [12, 40, 5, 1, ['文件中1.45mm（57.09mil）的孔为压接孔，成品孔径按1.45mm+/-0.05mm制作；其他孔按刚标', 595], ['通用要求即可', 83]],
    [13, 36, 6, 0, ['≤16mil的过孔按阻焊塞孔制作', 192]],
    [14, 40, 7, 1],
    [15, 32, 8, 1, ['板外的字符可忽略，不要制作，可以适当挪、套、删减丝印优先保证到阻焊开窗区域的安全距离。', 600]],
    [16, 40, 9, 1, ['单元板内添加平衡铜；平衡铜点要求：平衡铜点的大小、平衡铜点之间的距离板厂自己管控，与有', 601], ['效性线路的间距必须≥80mil。', 190]],
    [17, 40, 10, 1, ['附图箭头指示的位置板边按极限削铜8mil，保证不漏铜制作', 367]],
    [18, 40, 11, 1, ['不需要添加泪滴制作', 125]],
    [19, 10, '', 1]
];
const links = { 10: '图3(', 17: '图1(' };

define('work-sheet', `
    <style>
        :host { display: block; background: #fff; height: 499px; overflow: hidden; font-family: "Liberation Serif", "Noto Sans CJK SC", serif; color: #111; }
        .head { display: flex; height: 20px; font-size: 15px; line-height: 20px; text-align: center; color: #26384f; }
        .head b { font-weight: normal; box-sizing: border-box; flex: none; background: linear-gradient(#f4f8fc, #d6e0ee); border-right: 1px solid #9eb6ce; border-bottom: 1px solid #9eb6ce; border-top: 1px solid #6d8db5; }
        .head .s { background: linear-gradient(#f8d48c, #efbd62); border-right-color: #e6953d; border-bottom-color: #d98c33; }
        .head .k { background: #a9c4e9; }
        .grid { display: grid; grid-template-columns: 34px 57px 38px 609px 1fr; grid-template-rows: ${sheetRows.map(r => r[1] + 'px').join(' ')}; }
        .grid > div { box-sizing: border-box; display: flex; }
        .rh { background: #e4ecf7; border-right: 1px solid #9eb6ce; border-bottom: 1px solid #9eb6ce; align-items: flex-end; justify-content: center; font-size: 16px; line-height: 14px; color: #26384f; }
        .rh.s { background: #ffd08a; border-color: #e6953d; }
        .n, .t, .x, .a { border-bottom: 1px solid #000; border-right: 1px solid #000; }
        .n { align-items: center; justify-content: center; font-size: 17px; -webkit-text-stroke: .3px #111; }
        .t { flex-direction: column; justify-content: center; padding-left: 3px; font-weight: bold; font-size: 13.5px; line-height: 16px; }
        .y { background: #ff0; color: #f60505; }
        .t fit-text { height: 16px; }
        .a { grid-column: 2; grid-row: 2 / 14; flex-direction: column; align-items: center; padding-top: 214px; border-bottom: 0; font-size: 16px; line-height: 19px; -webkit-text-stroke: .5px #111; }
        .x { border-right: 0; font-size: 16px; color: #7a1282; align-items: center; padding-left: 2px; text-decoration: underline; white-space: nowrap; overflow: hidden; }
        .cur { border: 1px solid #000; box-shadow: inset 0 0 0 1px #fff; padding-left: 2px; }
        mark { background: #0404e8; color: #0ff; }
    </style>
    <div class="head">
        <b class="k" style="width:34px"><svg width="34" height="18" style="display:block"><path d="M29 5v10H19z" fill="#e4eefb"/></svg></b>
        ${[['A', 57], ['B', 38], ['C', 166, 1], ['D', 31, 1], ['E', 81, 1], ['F', 54, 1], ['G', 49, 1], ['H', 89, 1], ['I', 139, 1], ['', 60]].map(c => `<b class="${c[2] ? 's' : ''}" style="width:${c[1]}px">${c[0]}</b>`).join('')}
    </div>
    <div class="grid">
        ${sheetRows.map(([r, h, n, y, ...ls], i) => {
            const row = `grid-row:${i + 1}`;
            const rh = `<div class="rh ${r === 14 ? 's' : ''}" style="grid-column:1;${row}">${r === 19 ? '' : r}</div>`;
            const link = `<div class="x" style="grid-column:5;${row};${r === 7 ? 'border-bottom:0' : ''}">${links[r] || ''}</div>`;
            if (r === 7) return rh + `<div class="n" style="grid-column:2/4;${row}">特殊备注</div><div class="t" style="grid-column:4;${row}"></div>` + link;
            const body = r === 14
                ? '<span style="display:flex"><fit-text w="97"><mark>添加防静电标记</mark></fit-text><fit-text w="369">；添加批次号，第一批添加001，第二批添加002，以此类推</fit-text></span>'
                : ls.map(l => `<fit-text w="${l[1]}">${l[0]}</fit-text>`).join('');
            return rh + `<div class="n" style="grid-column:3;${row}">${n}</div><div class="t ${y ? 'y' : ''} ${r === 14 ? 'cur' : ''}" style="grid-column:4;${row}">${body}</div>` + link;
        }).join('')}
        <div class="a"><fit-text w="27" style="font-family:'Liberation Mono'">CAM</fit-text><span>指示</span></div>
    </div>
`);

define('sheet-tabs', `
    <style>
        :host { display: flex; height: 16px; background: linear-gradient(#b5cdec, #d3e4f8); font: 15px/16px "Liberation Serif", "Noto Sans CJK SC", serif; color: #20436f; white-space: nowrap; overflow: hidden; }
        .nav { width: 63px; background: #d2e1f4; display: flex; justify-content: space-around; align-items: center; border-right: 1px solid #8fa9cc; box-sizing: border-box; flex: none; padding: 0 2px; }
        .on { background: #fff; padding: 0 0 0 9px; flex: none; width: 45px; font-size: 14px; }
        .tab { width: 61px; flex: none; padding-right: 18px; display: flex; }
        .tab svg { margin-left: -13px; flex: none; }
        tt { font: 13px/16px "Liberation Mono", monospace; }
    </style>
    <span class="nav"><svg width="56" height="9" fill="#1e4a8c"><path d="M2 0h1.500v9H2zM8 0v9L4 4.500zM20 0v9l-4.500-4.500zM31 0v9l4.500-4.500zM45 0v9l4-4.500zM50 0h1.500v9H50z"/></svg></span>
    <span class="on">指示</span>
    ${[1, 2, 3, 4, 5, 6, 7, 8].map(n => `<span class="tab"><svg width="13" height="16" fill="none" stroke="#7391b8"><path d="M1 16L11 2"/></svg><fit-text w="61">图<tt>${n}(fig${n})</tt></fit-text></span>`).join('')}<span class="tab"><svg width="13" height="16" fill="none" stroke="#7391b8"><path d="M1 16L11 2"/></svg><fit-text w="21">图<tt>9</tt></fit-text></span>
`);

define('excel-window', `
    <style>
        :host { position: absolute; left: 1142px; top: 45px; width: 778px; height: 774px; box-sizing: border-box; padding: 0 0 5px 6px; border: 1px solid #000; border-right: 0; border-radius: 7px 0 0 7px; display: flex; flex-direction: column; overflow: hidden;
            font-size: 12px; backdrop-filter: blur(3px); box-shadow: inset 1px 1px #d5e8ef, inset 0 -1px #b9c1c4, 0 0 5px #0009;
            background: linear-gradient(90deg, #ffffff50 0 1px, #0000 1px), linear-gradient(#6f9fb3cc 0 28px, #68767d 29px, #555d62 150px, #bdbdbd 208px, #080808 214px); }
        .title { height: 28px; box-sizing: border-box; display: flex; flex: none; align-items: center; border-bottom: 1px solid #3f5d6d; padding-left: 2px; position: relative; }
        .orb { position: absolute; left: 3px; top: 6px; z-index: 2; }
        .qat { margin-left: 36px; height: 21px; width: 106px; border: 1px solid #46687a; border-left: 0; border-radius: 0 11px 11px 0; display: flex; align-items: center; gap: 7px; padding-left: 14px; box-sizing: border-box; background: #8fb6c533; margin-top: 3px; }
        .name { position: absolute; left: 549px; top: 6px; font-size: 13px; line-height: 18px; color: #111; white-space: pre; text-shadow: 0 0 5px #fff, 0 0 8px #fff, 0 0 8px #fff; }
        .warn { height: 33px; box-sizing: border-box; margin: 6px 0 5px 2px; border: 1px solid #9db9dd; background: linear-gradient(#fff, #e3eefb); display: flex; align-items: center; padding-left: 3px; color: #1e4a8c; }
        .warn button { font: 12px "Noto Sans CJK SC"; color: #1e4a8c; width: 70px; height: 21px; background: #f8fbff; border: 1px solid #7ba0cc; padding: 0; margin-left: 16px; }
        .fx { display: flex; height: 20px; background: #fff; border: 1px solid #7f9fc9; border-left: 0; box-sizing: border-box; align-items: center; font: 15px/18px "Liberation Serif", "Noto Sans CJK SC", serif; color: #111; }
        .pill { width: 76px; height: 18px; box-sizing: border-box; border-radius: 9px 0 0 9px; border: 1px solid #8ba8cc; background: linear-gradient(#e3ecf8, #b7cae4); display: flex; align-items: center; }
        .gap { height: 4px; background: #c4d9f3; }
        .status { flex: 1; background: linear-gradient(#dceafb, #c3d9f5 50%, #b1cdf2 52%, #d3e5fb); border-top: 1px solid #8fb0da; color: #1e3c6e; font-size: 12px; line-height: 20px; padding-left: 7px; }
        .content { display: flex; flex-direction: column; flex: 1; background: #c4d9f3; min-height: 0; }
    </style>
    <div class="title">
        <svg class="orb" width="38" height="38" viewBox="0 0 38 38">
            <defs><radialGradient id="g" cx=".5" cy=".3"><stop offset="0" stop-color="#fff"/><stop offset=".7" stop-color="#cdd5df"/><stop offset="1" stop-color="#8c9aac"/></radialGradient></defs>
            <circle cx="19" cy="19" r="17.500" fill="url(#g)" stroke="#56697c"/>
            <g fill="none" stroke-width="2.800"><path d="M15 17H9V9h8v5" stroke="#d9481a"/><path d="M21 15v-3h6v5h-4" stroke="#4e8ed0"/><path d="M15 22h-4v7h6v-5" stroke="#eeb02d"/><path d="M22 23v6h7v-7h-5" stroke="#5fa33b"/></g><path d="M17 17h4v4h-4z" fill="#e88b2c"/>
        </svg>
        <div class="qat">
            <svg width="15" height="15"><path d="M.5.5h14v14H.5z" fill="#4448b8" stroke="#23287c"/><path d="M3 1h9v6H3z" fill="#f3f6ff"/><path d="M4 10h7v5H4z" fill="#dde"/><path d="M8 11h2v3H8z" fill="#223"/></svg>
            <svg width="12" height="12" fill="none" stroke="#7b97a6" stroke-width="2.200" style="margin-left:2px"><path d="M2 2v4h4M2 6q8-6 8 1 0 3-4 4"/></svg><svg width="6" height="4" fill="none" stroke="#dce9ef"><path d="M0 0l3 3 3-3"/></svg>
            <svg width="12" height="12" fill="none" stroke="#7b97a6" stroke-width="2.200"><path d="M10 2v4H6M10 6Q2 0 2 7q0 3 4 4"/></svg><svg width="6" height="4" fill="none" stroke="#dce9ef"><path d="M0 0l3 3 3-3"/></svg>
        </div>
        <svg width="7" height="8" style="margin:4px 0 0 7px"><path d="M1 1h5M1.500 3.500h4L3.500 6z" stroke="#16304a" fill="#16304a"/></svg>
        <div class="name"><fit-text w="221">2AA0M0SQA0-预审指示  [兼容模式] - M</fit-text></div>
    </div>
    <div class="content">
        <excel-ribbon></excel-ribbon>
        <div class="warn">
            <svg width="14" height="17"><path d="M7 .5l6 2.500v6q-1 5-6 7.500Q2 14 1 9V3z" fill="#f5a32b" stroke="#5d6a75"/><path d="M3 4l4-2v6H2.500z" fill="#ffd98a"/><path d="M7 8h5q-1 4-5 6z" fill="#dd6a10"/></svg>
            <b style="margin-left:11px">安全警告</b><fit-text w="126" style="margin-left:12px">部分活动内容已被禁用。</fit-text><button>选项...</button>
        </div>
        <div class="fx"><span style="width:139px;text-align:center;flex:none">C14</span><svg width="7" height="5" style="margin:0 7px 0 7px;flex:none"><path d="M0 0h7L3.500 4.500z"/></svg>
            <span class="pill"><svg width="74" height="16" fill="none" stroke="#5a6270" stroke-width="1.800"><circle cx="9" cy="8" r="4.500" fill="#a9b9cf" stroke="#dbe5f1"/><path d="M24 4l7 8M31 4l-7 8M40 9l4 3 7-9"/><text x="59" y="12" font-size="13" font-style="italic" font-weight="bold" fill="#3f4653" stroke="none" font-family="Liberation Serif">fx</text></svg></span>
            <fit-text w="497" style="margin-left:11px">添加防静电标记；添加批次号，第一批添加001，第二批添加002，以此类推</fit-text></div>
        <div class="gap"></div>
        <work-sheet></work-sheet>
        <sheet-tabs></sheet-tabs>
        <div class="status"><span style="display:inline-block;width:34px;border-right:1px solid #9dbbe2">编辑</span></div>
    </div>
`);

/* ===== taskbar ===== */
const gear = '<svg width="32" height="32" viewBox="0 0 32 32"><path d="M1 8q6-7 12-5l2 5-8 4z" fill="#6fc0c4" stroke="#1d4350"/><ellipse cx="18" cy="19" rx="12" ry="10" fill="#1c2f44"/><ellipse cx="18" cy="18" rx="10" ry="8" fill="#18a596" stroke="#0b5f63" stroke-width="2" stroke-dasharray="4 1.200"/><ellipse cx="18" cy="17" rx="5.500" ry="4.200" fill="#124d55" stroke="#bde8d8" stroke-width="1.500"/><circle cx="19" cy="16" r="2" fill="#e8c81c"/><path d="M7 24q10 9 21 0" stroke="#8b939c" stroke-width="2" fill="none"/></svg>';
const icons = [
    '<svg width="34" height="32" viewBox="0 0 34 32"><path d="M17 1C8 1 1 8 2 15l10 12v4h10v-4L32 15C33 8 26 1 17 1z" fill="#f4d28e" stroke="#b98a3c"/><path d="M17 2v24M11 3l4 23M23 3l-4 23M5 8l8 18M29 8l-8 18" stroke="#c99c50"/><path d="M22 12l3 6 7 1-5 4 2 8-7-4-7 4 2-8-5-4 7-1z" fill="#ee8a2a" stroke="#b4560f"/></svg>',
    '<svg width="26" height="30"><path d="M1 1h24v28H1z" fill="#f5fbff" stroke="#9cc6e2"/><path d="M3 5h20M3 9h20M3 13h20M3 17h20M3 21h20M3 25h20" stroke="#3d9fc9" stroke-width="2"/></svg>',
    '<svg width="32" height="32" viewBox="0 0 32 32"><path d="M27 1l1 6H16q-5 3-6 9-1 7 2 9h6l2-6h-5l2-5h11l-3 13-6 3H8l-5-5q-2-7 2-15 4-7 12-8 7 0 10-1z" fill="#d8231c" stroke="#8e100c"/></svg>',
    '<svg width="32" height="32"><path d="M1 1h27l3 3v27H1z" fill="#2f4fc4" stroke="#1a2c7c"/><path d="M9 1h14v10H9z" fill="#dfe3e8"/><path d="M18 2h3v7h-3z" fill="#223"/><path d="M4 14h24v16H4z" fill="#fff"/><path d="M6 18h18M6 22h14M6 26h9" stroke="#b33"/><text x="16" y="29" font-size="9" fill="#222">64·</text></svg>',
    '<svg width="30" height="30"><rect width="30" height="30" rx="5" fill="#0a8ff2"/><path d="M8 5l10 7q6 4 3 8h3l-3 3-6 5 1-6q-6-3-5-6l4 2q-6-4-7-13z" fill="#fff"/></svg>',
    '<svg width="32" height="32"><path d="M4 30L9 2h21" fill="none" stroke="#13803c" stroke-width="1.500"/><path d="M13 7h10q8 1 7 9-1 8-9 8h-3l-2 6H8z" fill="#109144"/><path d="M8 16h8M7 19h8" stroke="#0a5028"/></svg>',
    gear,
    '<svg width="34" height="30"><path d="M30 1L3 29" stroke="#e8d8e8" stroke-width="3"/><path d="M30 1L3 29" stroke="#3a0838" stroke-width="1.500"/><path d="M2 1h8l19 28h-8z" fill="#8d1389" stroke="#e6dbe6"/></svg>',
    '<svg width="34" height="31"><path d="M4 2h18v22H4z" fill="#b8c8e4" stroke="#6f86b0"/><path d="M9 5l19-3 4 4v24l-22-3z" fill="#f6f9ff" stroke="#8da0c4"/><path d="M12 9l3 11 3-9 3 9 3-12" fill="none" stroke="#2d54a6" stroke-width="2.500"/><path d="M14 24h13M27 12h3M26 16h4M26 20h4" stroke="#3f66b0" stroke-width="1.500"/></svg>',
    '<svg width="34" height="32"><path d="M3 3q1-2 4-2h19v20H3z" fill="#eef6ea" stroke="#5f9c3f" stroke-width="1.500"/><path d="M8 6l19-2 5 3v22l-22 1z" fill="#f5fbf2" stroke="#7eae63"/><path d="M11 10l9 12M20 9l-9 13" stroke="#2e7d26" stroke-width="3.500"/><path d="M23 10h6v5h-6zM23 17h6v5h-6zM15 24h6v4h-6zM23 24h6v4h-6z" fill="#8bbf72"/></svg>',
    gear
];

define('win-taskbar', `
    <style>
        :host { position: absolute; left: 0; top: 1040px; width: 1920px; height: 40px; box-sizing: border-box; display: flex; align-items: center; color: #fff;
            background: linear-gradient(#00000000, #00000030), linear-gradient(#8ba3c0 0 1px, #48668c 2px, #234873 7px, #123461 14px, #0b2a56); }
        .orb { margin: 1px 15px 0 9px; flex: none; }
        .b { box-sizing: border-box; width: 58px; height: 39px; margin: 1px 4px 0 0; border: 1px solid #a2b4c9a0; border-radius: 3px; display: flex; align-items: center; justify-content: center; background: linear-gradient(145deg, #a5b6ca 0, #6f88a8 30%, #365781 55%, #274a75); flex: none; }
        .stack { width: 52px; margin-right: 10px; box-shadow: 3px 0 0 -1px #3b5c86, 3px 0 0 0 #a2b4c980; }
        .act { background: linear-gradient(145deg, #e3eaf0, #b8c8d2 50%, #9aafbf); }
        .tray { margin-left: auto; display: flex; align-items: center; }
        .clock { width: 80px; margin-left: 6px; text-align: center; font-size: 12.5px; line-height: 18.500px; }
        .peek { width: 12px; height: 38px; border: 1px solid #8398b4; background: linear-gradient(145deg, #60789a, #1b355c 60%); box-sizing: border-box; margin: 0 2px 0 -2px; }
        .lang { position: absolute; left: 1741px; top: -35px; width: 79px; height: 26px; background: linear-gradient(#5d6b70, #9ba7a8 12%, #5d6666 55%, #3f4747); display: flex; align-items: center; border-top: 1px solid #8fb2b4; box-sizing: border-box; }
    </style>
    <svg class="orb" width="36" height="36" viewBox="0 0 36 36"><defs><radialGradient id="o" cx=".5" cy=".85"><stop offset="0" stop-color="#3fd0ee"/><stop offset=".55" stop-color="#1d6ca5"/><stop offset="1" stop-color="#16395f"/></radialGradient></defs><circle cx="18" cy="18" r="17" fill="url(#o)" stroke="#92a9c0"/>
        <path d="M8 11q5-3 9-1l-1 7q-4-2-9 1z" fill="#ee6a2e"/><path d="M18 10q4 2 9 0l-1 8q-5 2-9 0z" fill="#8cc63e"/><path d="M7 19q5-3 9-1l-1 8q-4-2-9 1z" fill="#46a4e4"/><path d="M17 19q4 2 9 0l-1 8q-5 2-9 0z" fill="#fccb30"/></svg>
    ${icons.map((s, i) => `<div class="b ${i === 7 || i === 9 ? 'stack' : ''} ${i === 9 ? 'act' : ''}">${s}</div>`).join('')}
    <div class="tray">
        <svg width="8" height="5"><path d="M0 4.500L4 0l4 4.500z" fill="#fff"/></svg>
        <svg width="16" height="16" style="margin-left:13px"><path d="M1.500 1v14" stroke="#fff" stroke-width="1.500"/><path d="M2 2q4-1 6 0t5 0v7q-3 1-5 0T2 9z" fill="#fff"/><circle cx="10.500" cy="11" r="4.500" fill="#d62a23"/><path d="M8.500 9l4 4M12.500 9l-4 4" stroke="#fff" stroke-width="1.500"/></svg>
        <svg width="16" height="15" style="margin-left:8px"><path d="M1 5h3l4-4v13l-4-4H1z" fill="#fff"/><path d="M10 5q2 2.500 0 5M12 3q4 4.500 0 9" fill="none" stroke="#cfe0f2" stroke-width="1.200"/></svg>
        <svg width="16" height="15" fill="none" stroke="#fff" stroke-width="1.400" style="margin-left:8px"><path d="M5 4h10v8H5zM7 14h6M1 1v4h4V1M3 5v6h2"/></svg>
        <div class="clock">17:50<br>2022/7/29</div>
        <div class="peek"></div>
    </div>
    <div class="lang">
        <svg width="79" height="24"><path d="M5 5h8M5 9h8M5 13h8M5 17h8M5 21h8" stroke="#222a2c" stroke-dasharray="1.500 2"/><rect x="20" y="11" width="14" height="8" fill="#d8dcdc"/><path d="M22 13h10M22 15h10M22 17h10" stroke="#666" stroke-dasharray="1.500 1"/><path d="M25 9q0-3 6-2" stroke="#555" fill="none"/><circle cx="49" cy="12.500" r="7" fill="#1414b4" stroke="#b5bdf0"/><text x="49" y="17" text-anchor="middle" font-size="12" font-weight="bold" fill="#fff">?</text><path d="M68 8h5v1.500h-5zM67.500 16h6l-3 3.500z" fill="#fff"/></svg>
    </div>
`);

/* stretches its text to a set width; defined last so that its hosts are laid out already */
customElements.define('fit-text', class extends HTMLElement {
    connectedCallback() {
        this.attachShadow({ mode: 'open' });
        this.shadowRoot.innerHTML = '<style>:host { display: block; flex: none; white-space: pre; } span { display: inline-block; transform-origin: 0 50%; }</style><span><slot></slot></span>';
        const span = this.shadowRoot.querySelector('span');
        const w = +this.getAttribute('w');
        const natural = span.getBoundingClientRect().width;
        this.style.width = w + 'px';
        if (natural) span.style.transform = `scaleX(${w / natural})`;
    }
});
</script>
</body>
</html>
